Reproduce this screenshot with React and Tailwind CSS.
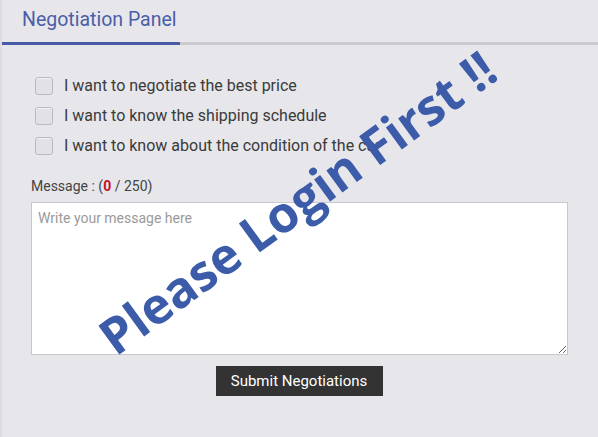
import React from 'react';

const options = [
  'I want to negotiate the best price',
  'I want to know the shipping schedule',
  'I want to know about the condition of the car',
];

export default function App() {
  return (
    <div className="relative w-[598px] h-[437px] overflow-hidden bg-[#e7e7eb] font-['Roboto',sans-serif] border-l-2 border-[#dcdce1]">
      {/* tab header */}
      <div className="flex border-b-[3px] border-[#c9c9ce]">
        <div className="w-[178px] -mb-[3px] border-b-[3px] border-[#4a5ba6] pl-5 pt-[7px] pb-[10px] text-[19.5px] leading-[25px] text-[#4b5ea8] whitespace-nowrap">
          Negotiation Panel
        </div>
      </div>

      <div className="pl-[29px] pr-[30px] pt-[32px]">
        <div className="flex flex-col gap-3 pl-1">
          {options.map((label) => (
            <label key={label} className="flex items-center gap-[11px] h-[18px] text-[16px] text-[#3a3a3a] whitespace-nowrap">
              <span className="shrink-0 w-[18px] h-[18px] rounded-[3px] border border-[#b9b9be] bg-[#e2e2e6] shadow-[inset_0_1px_1px_rgba(255,255,255,0.6)]" />
              {label}
            </label>
          ))}
        </div>

        <div className="mt-[23px] text-[14px] leading-[16px] text-[#444]">
          Message : (<span className="font-bold text-[#c8102e]">0</span> / 250)
        </div>

        <textarea
          className="mt-[8px] block w-[537px] h-[153px] bg-white border border-[#c8c8cc] px-[6px] py-[6px] text-[14px] leading-[18px] text-[#333] placeholder:text-[#9a9a9a] outline-none"
          placeholder="Write your message here"
        />

        <div className="flex justify-center mt-[11px] pr-[1px]">
          <button className="w-[167px] h-[30px] bg-[#333333] text-white text-[15px] leading-[20px]">
            Submit Negotiations
          </button>
        </div>
      </div>

      {/* watermark */}
      <div className="absolute left-[295px] top-[202px] -translate-x-1/2 -translate-y-1/2 -rotate-[36deg] whitespace-nowrap font-['Open_Sans',sans-serif] font-bold text-[50px] leading-none text-[#3c5caa] pointer-events-none">
        Please Login First !!
      </div>
    </div>
  );
}
